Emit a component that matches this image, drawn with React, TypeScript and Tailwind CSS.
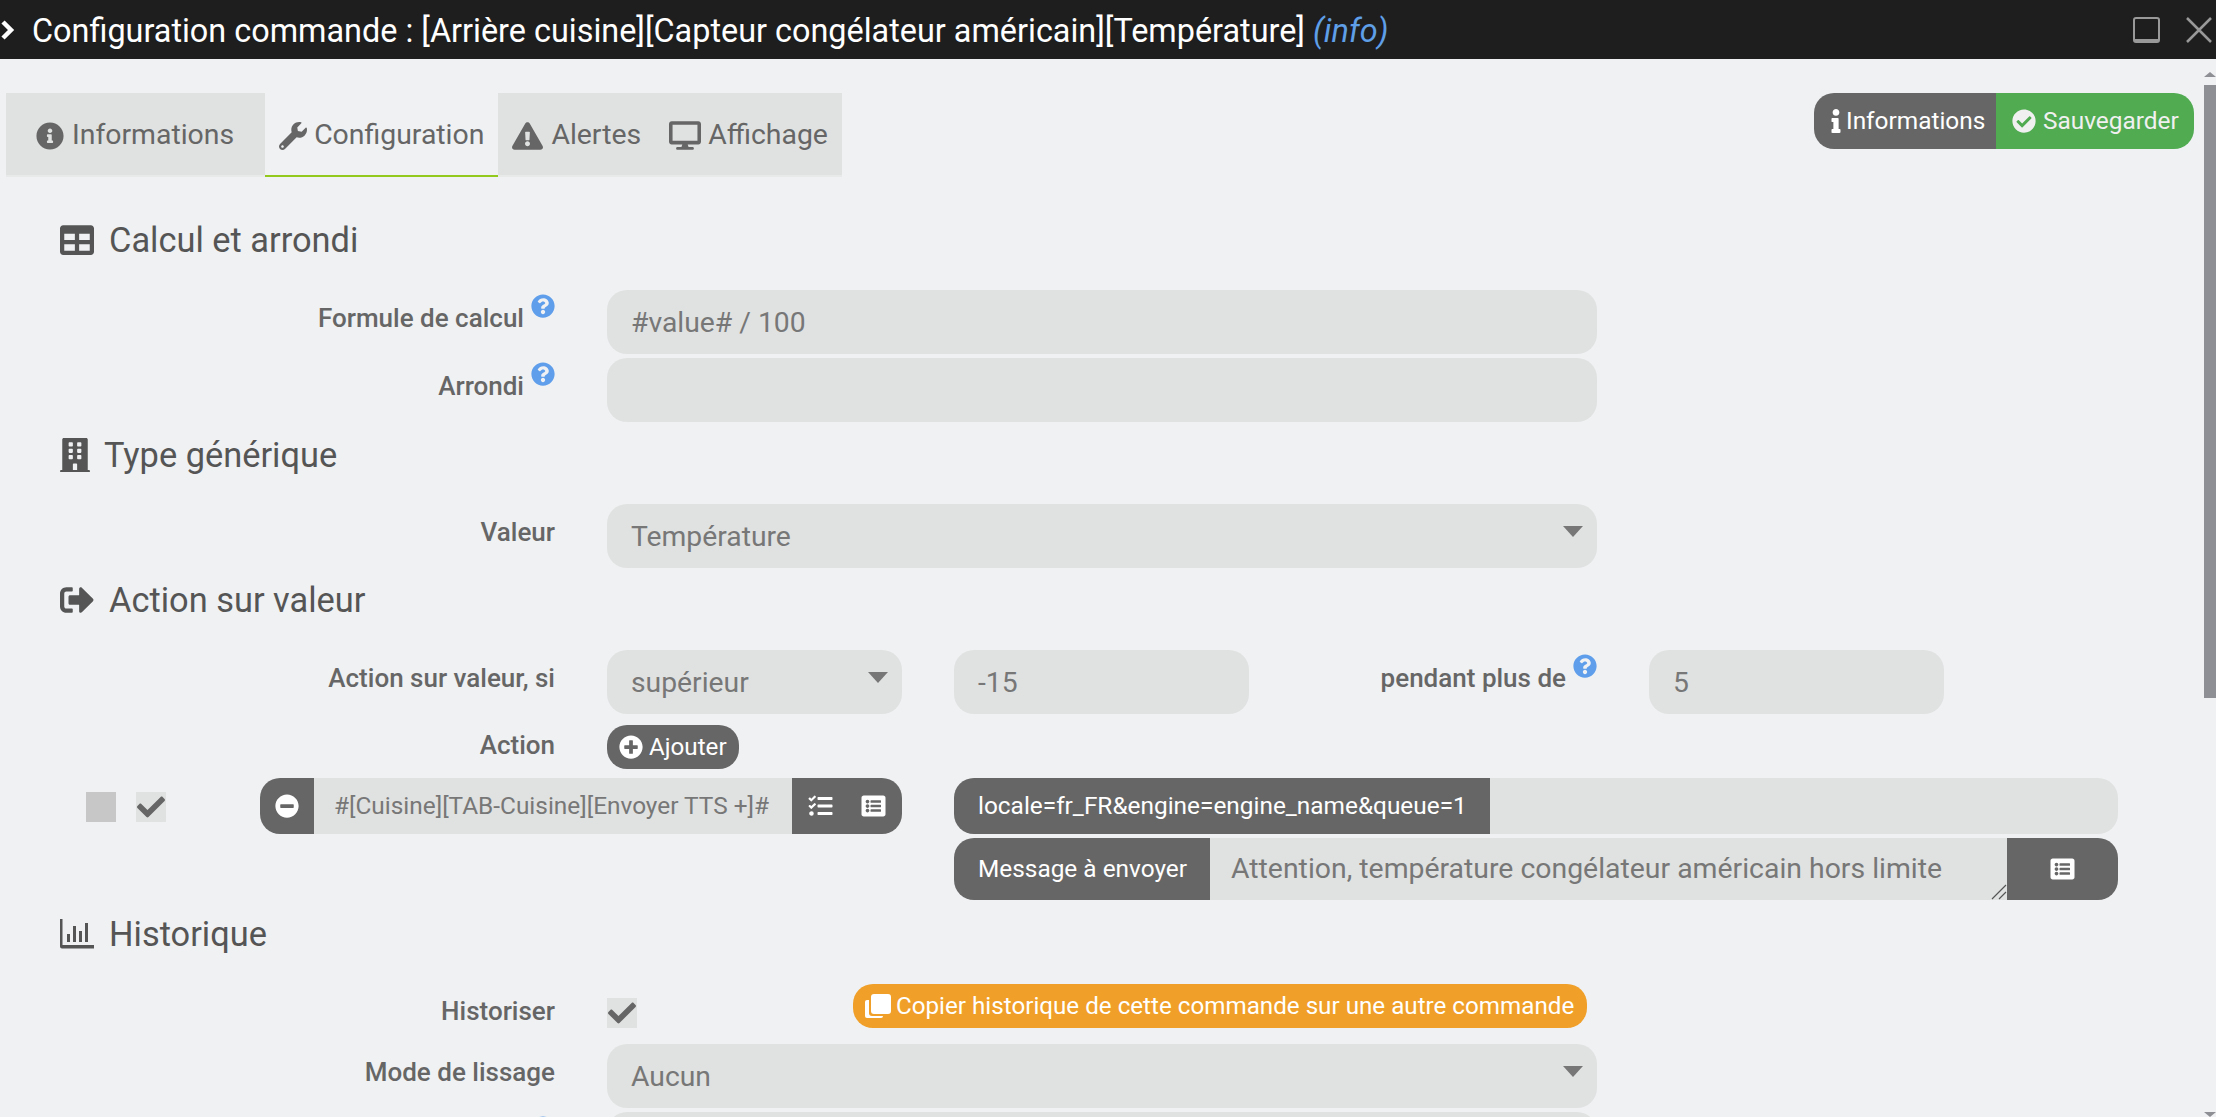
import React from 'react';
import { FaInfoCircle, FaWrench, FaExclamationTriangle, FaDesktop, FaTable, FaBuilding, FaSignOutAlt, FaCheck, FaInfo, FaCheckCircle, FaQuestionCircle, FaPlusCircle, FaMinusCircle, FaTasks, FaListAlt } from 'react-icons/fa';

function BarChartIcon() {
  return (
    <svg viewBox="0 0 34 30" className="w-[34px] h-[30px]" fill="#555">
      <path d="M0 0h2.5v26H34v3.5H2a2 2 0 0 1-2-2z" />
      <rect x="7" y="15" width="3" height="8" />
      <rect x="13" y="7" width="3" height="16" />
      <rect x="19" y="12" width="3" height="11" />
      <rect x="25" y="4" width="3" height="19" />
    </svg>
  );
}

function CopyIcon() {
  return (
    <svg viewBox="0 0 26 24" className="w-[26px] h-[24px]">
      <rect x="0" y="6" width="18" height="18" rx="2" fill="#fff" />
      <rect x="4" y="-2" width="24" height="24" rx="3" fill="#f09f28" />
      <rect x="6" y="0" width="20" height="20" rx="3" fill="#fff" />
    </svg>
  );
}

function Tab({ icon, label, active, pl, pr = 'pr-[14px]', gap = 'gap-[7px]' }: { icon: React.ReactNode; label: string; active?: boolean; pl: string; pr?: string; gap?: string }) {
  return (
    <div
      className={`flex items-center h-[84px] pt-[3px] text-[#666] text-[28.4px] ${gap} ${pl} ${pr} ${
        active ? 'border-b-2 border-[#93c91c]' : 'bg-[#e0e2e1] border-b-2 border-[#e8eaea]'
      }`}
    >
      {icon}
      <span>{label}</span>
    </div>
  );
}

function Title({ icon, label, gap = 'gap-[15px]', mt }: { icon: React.ReactNode; label: string; gap?: string; mt: string }) {
  return (
    <div className={`flex items-center h-[40px] pl-[54px] text-[#555] text-[34.4px] ${gap} ${mt}`}>
      {icon}
      <span className="pt-[2px]">{label}</span>
    </div>
  );
}

function Help() {
  return <FaQuestionCircle className="text-[#5e9eea] w-[24px] h-[24px] shrink-0 -mt-[6px]" />;
}

function Label({ text, help, className = 'w-[549px] mr-[52px]' }: { text?: string; help?: boolean; className?: string }) {
  return (
    <div className={`flex justify-end items-start gap-[7px] pt-[6px] text-[#666] text-[26px] font-medium leading-[44px] shrink-0 ${className}`}>
      {text && <span>{text}</span>}
      {help && (
        <span className="h-[44px] flex items-start pt-[4px]">
          <Help />
        </span>
      )}
    </div>
  );
}

function Field({ value, select, className = 'w-[990px]' }: { value?: string; select?: boolean; className?: string }) {
  return (
    <div className={`relative h-[64px] rounded-[20px] bg-[#e0e2e1] pl-[24px] pt-[3px] flex items-center text-[#777] text-[28.3px] shrink-0 ${className}`}>
      {value}
      {select && <div className="absolute top-[22px] right-[14px] w-0 h-0 border-x-[10px] border-x-transparent border-t-[11px] border-t-[#777]" />}
    </div>
  );
}

function Check({ mark = true, className = '' }: { mark?: boolean; className?: string }) {
  return (
    <div className={`w-[30px] h-[30px] flex items-center justify-center shrink-0 ${mark ? 'bg-[#e0e2e1]' : 'bg-[#c7c7c7]'} ${className}`}>
      {mark && <FaCheck className="w-[28px] h-[28px] text-[#666]" />}
    </div>
  );
}

export default function App() {
  return (
    <div className="h-[1117px] w-full overflow-hidden flex flex-col bg-[#eff1f3]" style={{ fontFamily: 'Roboto, sans-serif' }}>
      <header className="h-[59px] bg-[#1e1e1e] flex items-center pr-[4px] shrink-0">
        <svg viewBox="0 0 15 20" className="w-[15px] h-[20px] mr-[17px]" fill="none" stroke="#fff" strokeWidth="4.5">
          <path d="M3 2l8 8-8 8" />
        </svg>
        <span className="text-white text-[32.4px] whitespace-nowrap pt-[3px]">
          Configuration commande : [Arrière cuisine][Capteur congélateur américain][Température]{' '}
          <i className="text-[#5f9fe8]">(info)</i>
        </span>
        <div className="ml-auto flex items-center gap-[26px]">
          <div className="w-[27px] h-[26px] border-2 border-b-4 border-[#999] rounded-[3px]" />
          <svg viewBox="0 0 26 26" className="w-[26px] h-[26px]" stroke="#999" strokeWidth="2.5">
            <path d="M1 1l24 24M25 1L1 25" />
          </svg>
        </div>
      </header>

      <div className="flex flex-1 min-h-0">
        <main className="flex-1 min-w-0 pl-[6px] pr-[10px] pt-[34px]">
          <div className="flex justify-between items-start">
            <div className="flex">
              <Tab pl="pl-[30px]" pr="pr-[31px]" gap="gap-[8px]" icon={<FaInfoCircle className="w-[28px] h-[28px]" />} label="Informations" />
              <Tab pl="pl-[14px]" active icon={<FaWrench className="w-[28px] h-[28px]" />} label="Configuration" />
              <Tab pl="pl-[14px]" gap="gap-[8px]" icon={<FaExclamationTriangle className="w-[31px] h-[28px]" />} label="Alertes" />
              <Tab pl="pl-[14px]" icon={<FaDesktop className="w-[32px] h-[29px]" />} label="Affichage" />
            </div>
            <div className="flex h-[56px] rounded-[20px] overflow-hidden text-white text-[24.4px]">
              <div className="w-[182px] bg-[#666] flex items-center pl-[16px] gap-[4px]">
                <FaInfo className="w-[12px] h-[24px]" />
                Informations
              </div>
              <div className="w-[198px] bg-[#50ab51] flex items-center pl-[16px] gap-[7px] text-[#f0f0f0]">
                <FaCheckCircle className="w-[24px] h-[24px]" />
                Sauvegarder
              </div>
            </div>
          </div>

          <Title mt="mt-[43px]" icon={<FaTable className="w-[34px] h-[34px]" />} label="Calcul et arrondi" />
          <div className="flex mt-[30px]">
            <Label text="Formule de calcul" help />
            <Field value="#value# / 100" />
          </div>
          <div className="flex mt-[4px]">
            <Label text="Arrondi" help />
            <Field />
          </div>

          <Title mt="mt-[13px]" gap="gap-[14px]" icon={<FaBuilding className="w-[30px] h-[34px]" />} label="Type générique" />
          <div className="flex mt-[29px]">
            <Label text="Valeur" />
            <Field value="Température" select />
          </div>

          <Title mt="mt-[12px]" icon={<FaSignOutAlt className="w-[34px] h-[34px]" />} label="Action sur valeur" />
          <div className="flex mt-[30px]">
            <Label text="Action sur valeur, si" />
            <Field value="supérieur" select className="w-[295px]" />
            <Field value="-15" className="w-[295px] ml-[52px]" />
            <Label text="pendant plus de" help className="w-[348px] mr-[52px]" />
            <Field value="5" className="w-[295px]" />
          </div>
          <div className="flex mt-[11px]">
            <Label text="Action" className="w-[549px] mr-[52px] -mt-[8px]" />
            <div className="h-[44px] w-[132px] rounded-[20px] bg-[#666] flex items-center pl-[12px] gap-[6px] text-white text-[24.2px]">
              <FaPlusCircle className="w-[24px] h-[24px]" />
              Ajouter
            </div>
          </div>

          <div className="flex items-start mt-[9px] pl-[80px]">
            <div className="flex gap-[20px] mt-[14px]">
              <Check mark={false} />
              <Check />
            </div>
            <div className="ml-[94px] w-[642px] h-[56px] rounded-[20px] overflow-hidden flex text-white">
              <div className="w-[54px] bg-[#666] flex items-center justify-center">
                <FaMinusCircle className="w-[24px] h-[24px]" />
              </div>
              <div className="flex-1 bg-[#e0e2e1] flex items-center pl-[20px] text-[#777] text-[24.4px] whitespace-nowrap">
                #[Cuisine][TAB-Cuisine][Envoyer TTS +]#
              </div>
              <div className="w-[110px] bg-[#666] flex items-center pl-[16px] gap-[28px]">
                <FaTasks className="w-[25px] h-[24px]" />
                <FaListAlt className="w-[25px] h-[24px]" />
              </div>
            </div>
            <div className="ml-[52px] w-[1164px] flex flex-col gap-[4px]">
              <div className="h-[56px] rounded-[20px] overflow-hidden bg-[#e0e2e1] flex">
                <div className="w-[536px] bg-[#666] flex items-center pl-[24px] text-white text-[24.4px] whitespace-nowrap">
                  locale=fr_FR&amp;engine=engine_name&amp;queue=1
                </div>
              </div>
              <div className="h-[62px] rounded-[20px] overflow-hidden flex">
                <div className="w-[256px] bg-[#666] flex items-center pl-[24px] text-white text-[24.4px] whitespace-nowrap">
                  Message à envoyer
                </div>
                <div className="relative flex-1 bg-[#e0e2e1] flex items-center pl-[21px] pt-[1px] text-[#777] text-[28.4px] whitespace-nowrap">
                  Attention, température congélateur américain hors limite
                  <svg viewBox="0 0 16 16" className="absolute right-0 bottom-0 w-[16px] h-[16px]" stroke="#555" strokeWidth="1.2">
                    <path d="M1 15L15 1M8 15L15 8" />
                  </svg>
                </div>
                <div className="w-[111px] bg-[#666] flex items-center justify-center text-white">
                  <FaListAlt className="w-[25px] h-[24px]" />
                </div>
              </div>
            </div>
          </div>

          <Title mt="mt-[14px]" gap="gap-[15px]" icon={<BarChartIcon />} label="Historique" />
          <div className="flex items-start mt-[30px] h-[44px]">
            <Label text="Historiser" className="w-[549px] mr-[52px] -mt-[1px]" />
            <Check className="mt-[14px]" />
            <div className="ml-[216px] w-[734px] h-[44px] rounded-[20px] bg-[#f09f28] flex items-center pl-[12px] gap-[5px] text-white text-[24.2px] whitespace-nowrap">
              <CopyIcon />
              Copier historique de cette commande sur une autre commande
            </div>
          </div>
          <div className="flex mt-[16px]">
            <Label text="Mode de lissage" />
            <Field value="Aucun" select />
          </div>
          <div className="flex mt-[4px]">
            <Label help />
            <Field />
          </div>
        </main>

        <aside className="w-[12px] shrink-0 flex flex-col items-center pt-[13px]">
          <div className="w-0 h-0 border-x-[6px] border-x-transparent border-b-[5px] border-b-[#8e8e95]" />
          <div className="w-full h-[613px] bg-[#8e8e95] mt-[8px]" />
          <div className="mt-auto w-0 h-0 border-x-[6px] border-x-transparent border-t-[5px] border-t-[#8e8e95]" />
        </aside>
      </div>
    </div>
  );
}
